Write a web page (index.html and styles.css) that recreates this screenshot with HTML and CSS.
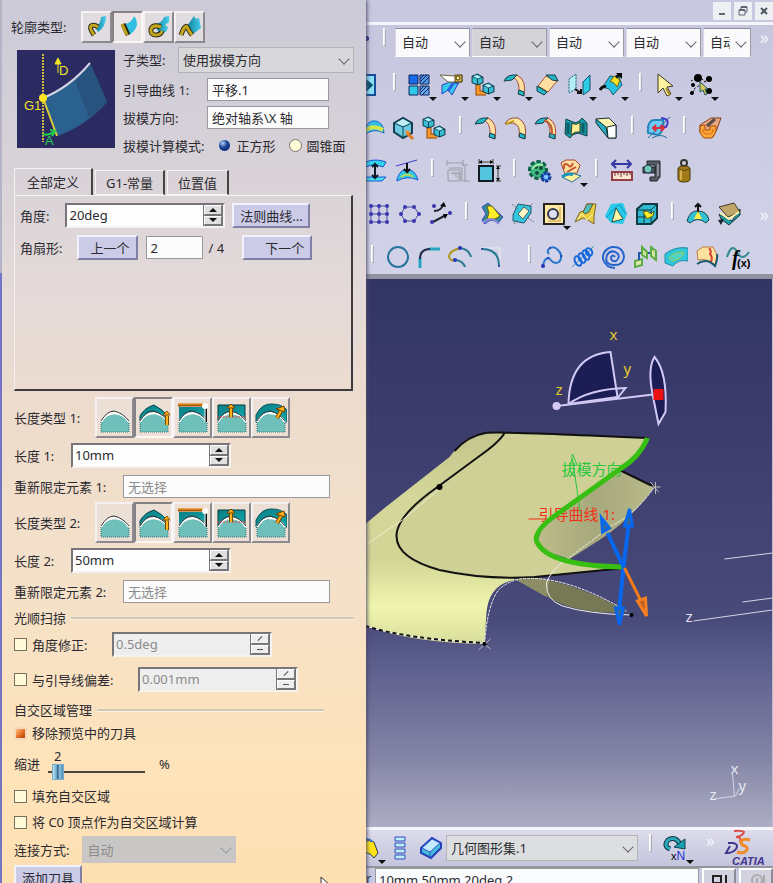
FILE: index.html
```html
<!DOCTYPE html>
<html lang="zh-CN">
<head>
<meta charset="utf-8">
<meta name="viewport" content="width=device-width, initial-scale=1">
<title>CATIA</title>
<link rel="stylesheet" href="styles.css">
</head>
<body>
<svg class="sprite" aria-hidden="true">
  <defs>
    <linearGradient id="blade" x1="0" x2="1"><stop offset="0" stop-color="#0f7f9c"/><stop offset="1" stop-color="#45cdea"/></linearGradient>
    <linearGradient id="teal" x1="0" x2="1" y2="1"><stop offset="0" stop-color="#0b7f86"/><stop offset="1" stop-color="#12a7ad"/></linearGradient>
  </defs>
  <!-- profile types -->
  <symbol id="prof-explicit" viewBox="0 0 24 24"><path d="M10 12Q16 9 16 2L21 1Q21 12 13 17Z" fill="url(#blade)"/><path d="M9 20Q4 13 6 11Q9 9 13 12" fill="none" stroke="#2c2a18" stroke-width="5"/><path d="M9 20Q4 13 6 11Q9 9 13 12" fill="none" stroke="#c2a51c" stroke-width="3"/></symbol>
  <symbol id="prof-line" viewBox="0 0 24 24"><path d="M8 9Q16 8 18 1Q21 4 21 10Q19 17 13 20Z" fill="#30bfe0"/><path d="M7 9L12 20" stroke="#2c2a18" stroke-width="5"/><path d="M6 9L11 20" stroke="#c2a51c" stroke-width="3"/></symbol>
  <symbol id="prof-circle" viewBox="0 0 24 24"><path d="M8 9Q15 8 17 2L22 1V7L18 10L21 12Q20 19 12 19Z" fill="url(#blade)"/><path d="M14 12Q6 9 4 14Q3 20 9 20Q14 20 15 16" fill="none" stroke="#2c2a18" stroke-width="5"/><path d="M14 12Q6 9 4 14Q3 20 9 20Q14 20 15 16" fill="none" stroke="#c2a51c" stroke-width="3"/></symbol>
  <symbol id="prof-conic" viewBox="0 0 24 24"><path d="M9 11L16 1L18 4L21 3L23 13L15 19Z" fill="url(#blade)"/><path d="M3 20Q7 9 9 12Q11 16 14 20" fill="none" stroke="#2c2a18" stroke-width="5"/><path d="M3 20Q7 9 9 12Q11 16 14 20" fill="none" stroke="#c2a51c" stroke-width="3"/></symbol>
  <!-- length types -->
  <symbol id="dome" viewBox="0 0 32 32"><path d="M2 30V20Q5 14 16 12Q27 14 30 20V30Z" fill="#6fc0bb"/><path d="M2 20Q7 11 16 11Q25 12 30 20" fill="none" stroke="#fff" stroke-width="2"/><path d="M2 19Q8 9 15 9Q24 11 30 19" fill="none" stroke="#333" stroke-width="1"/><path d="M2 20V30H30V20" fill="none" stroke="#3d706e" stroke-dasharray="1 1"/></symbol>
  <symbol id="len-none" viewBox="0 0 32 32"><use href="#dome"/></symbol>
  <symbol id="len-std" viewBox="0 0 32 32"><path d="M2 20V14Q6 6 16 3Q26 8 30 15V20Q16 0 2 20" fill="url(#teal)" stroke="#063f43"/><use href="#dome"/><path d="M29 23V14" stroke="#7a4a00" stroke-width="4"/><path d="M29 23V13" stroke="#ffb31a" stroke-width="2"/><path d="M25 13L29 9L32 13Z" fill="#ffa90f" stroke="#8a4d00"/></symbol>
  <symbol id="len-upto" viewBox="0 0 32 32"><path d="M2 5H28V20Q16 2 2 20Z" fill="url(#teal)"/><use href="#dome"/><path d="M1 3H28" stroke="#a55300" stroke-width="3"/><path d="M1 2H28" stroke="#ffb43c"/><path d="M29 5V20" stroke="#111" stroke-width="2"/><path d="M28 3V20" stroke="#fff"/><circle cx="28" cy="4" r="3" fill="#fff"/></symbol>
  <symbol id="len-from" viewBox="0 0 32 32"><path d="M2 3H29V20Q16 2 2 20Z" fill="url(#teal)" stroke="#08383b"/><use href="#dome"/><path d="M1 15H31" stroke="#e04a4a" stroke-dasharray="2 1"/><path d="M15 15V6" stroke="#7a4a00" stroke-width="4"/><path d="M15 15V4" stroke="#ffb31a" stroke-width="2"/><path d="M11 6L15 2L19 6Z" fill="#ffb31a" stroke="#754100"/></symbol>
  <symbol id="len-along" viewBox="0 0 32 32"><path d="M1 13Q7 1 17 2Q27 2 32 8V20H28Q16 2 4 22L1 20Z" fill="url(#teal)" stroke="#075156"/><use href="#dome"/><path d="M22 16L27 7" stroke="#7a4a00" stroke-width="4"/><path d="M22 16L27 7" stroke="#ffb31a" stroke-width="2"/><path d="M21 7L29 4L30 10Z" fill="#ffb31a" stroke="#754100"/></symbol>
  <!-- toolbar row 1 -->
  <symbol id="t-view" viewBox="0 0 24 24"><path d="M2 2H22V22H2Z" fill="#8be1f4" stroke="#174e9c" stroke-width="2"/><path d="M4 12H17M13 8L18 12L13 17" fill="none" stroke="#075272" stroke-width="3"/></symbol>
  <symbol id="t-grid" viewBox="0 0 24 24"><g stroke="#10245f"><path d="M2 2H11V11H2Z" fill="#176be8"/><path d="M13 2H22V11H13Z" fill="#5399e6"/><path d="M2 13H11V22H2Z" fill="#2ccae8"/><path d="M13 13H22V22H13Z" fill="#62a7ea"/><path d="M13 9L20 2M15 11L22 4M13 20L20 13M15 22L22 15M13 6L17 2M13 17L17 13" /></g></symbol>
  <symbol id="t-plane" viewBox="0 0 24 24"><path d="M3 12L11 9L21 7L13 22L9 17L3 21Z" fill="#36cbed" stroke="#2a43c8"/><path d="M9 18L15 9L20 10" stroke="#2d5fe0" stroke-width="3" fill="none"/><path d="M1 2L16 3L23 2V9H15L9 9Z" fill="#fff" stroke="#6d6840"/><path d="M16 2H23V9H16Z" fill="#cfb04c" stroke="#504414"/><circle cx="19" cy="5" r="2" fill="#fff18d" stroke="#504414"/></symbol>
  <symbol id="cube" viewBox="0 0 12 12"><path d="M1 3L6 1L11 4V9L6 11L1 9Z" fill="#38bfd6" stroke="#124050"/><path d="M1 3L6 5L11 4M6 5V11" stroke="#124050" fill="none"/><path d="M2 3L6 2L9 4L6 5Z" fill="#b5effa"/></symbol>
  <symbol id="t-tree" viewBox="0 0 24 24"><path d="M7 11V20H15" stroke="#9b4300" stroke-width="5" fill="none"/><path d="M7 11V20H15" stroke="#ff9b2d" stroke-width="3" fill="none"/><use href="#cube" width="13" height="13"/><use href="#cube" x="11" y="9" width="13" height="13"/></symbol>
  <symbol id="t-sweep" viewBox="0 0 24 24"><path d="M8 4Q17 5 16 20L21 22Q24 7 14 2Z" fill="#ffe0a0" stroke="#a84b38"/><path d="M1 8Q4 1 14 2L9 7Z" fill="#25b6c7" stroke="#123d44"/><path d="M16 17L21 19V23L15 21Z" fill="#25b6c7" stroke="#123d44"/></symbol>
  <symbol id="t-sweep-y" viewBox="0 0 24 24"><path d="M1 8Q4 1 14 2Q24 7 21 22L15 20Q17 9 9 7Z" fill="#ffe59d" stroke="#934b36"/><path d="M2 8L10 5" stroke="#c39b16" stroke-width="2"/><path d="M16 17L21 19V23L15 21Z" fill="#25b6c7" stroke="#123d44"/></symbol>
  <symbol id="t-sweep-m" viewBox="0 0 24 24"><use href="#t-sweep"/><path d="M10 4Q19 7 18 19" stroke="#bb6038" stroke-width="2" fill="none"/></symbol>
  <symbol id="t-fold" viewBox="0 0 24 24"><path d="M3 13L11 3L22 8L13 19Z" fill="#ffe0a0" stroke="#b05139"/><path d="M11 2L20 2L23 8L17 7Z" fill="#25b6c7" stroke="#123d44"/><path d="M2 13L12 19L9 22L2 18Z" fill="#25b6c7" stroke="#123d44"/></symbol>
  <symbol id="t-offset" viewBox="0 0 24 24"><path d="M2 6L9 1V16L2 20Z" fill="#b5edf4" stroke="#176079" stroke-dasharray="2 1"/><path d="M16 9L23 2V17L16 22Z" fill="#2ccbe6" stroke="#125070"/><path d="M8 16L14 20M10 20H14V16" stroke="#111" stroke-width="2" fill="none"/></symbol>
  <symbol id="t-arrow-surf" viewBox="0 0 24 24"><path d="M3 15L11 3L20 4L23 12L14 22Q10 13 3 15Z" fill="#29c0e6" stroke="#195a61"/><path d="M11 9L15 3L21 7L18 14Q15 8 11 9Z" fill="#ffe02b" stroke="#806800"/><path d="M1 17Q4 12 7 14M17 4L22 1" stroke="#111" stroke-width="3" fill="none"/><path d="M17 0H23V6Z"/></symbol>
  <symbol id="t-select" viewBox="0 0 24 24"><path d="M5 1V20L10 15L14 23L18 21L14 14L20 13Z" fill="#fff3a2" stroke="#3c371f" stroke-width="1"/><path d="M13 15L17 22" stroke="#a08b2a" stroke-width="2"/></symbol>
  <symbol id="t-points" viewBox="0 0 24 24"><path d="M2 8L10 4L17 9M5 16L21 5M1 21L7 16M17 15L22 19" stroke="#111" stroke-dasharray="2 2" fill="none"/><circle cx="9" cy="5" r="4"/><circle cx="20" cy="6" r="3"/><circle cx="3" cy="20" r="2"/><circle cx="4" cy="12" r="2"/><circle cx="20" cy="18" r="3"/><path d="M11 9V19L14 17L16 22L18 21L16 16H19Z" fill="#dcc75b" stroke="#185b62"/></symbol>
  <!-- toolbar row 2 -->
  <symbol id="t-dome" viewBox="0 0 24 24"><path d="M1 18Q5 3 14 5Q22 7 22 17Q11 11 1 20Z" fill="#36bde7" stroke="#176dc7"/><path d="M3 15Q10 8 21 14" stroke="#d4e646" stroke-width="4" fill="none"/></symbol>
  <symbol id="t-box" viewBox="0 0 24 24"><path d="M2 7L11 2L20 7V17L11 22L2 16Z" fill="#6ccbe0" stroke="#124050" stroke-width="2"/><path d="M2 7L11 11L20 7M11 11V22" stroke="#124050" fill="none"/><path d="M4 7L11 3L18 7L11 10Z" fill="#c0f0f8"/><path d="M16 18L21 23" stroke="#e4751d" stroke-width="3"/><path d="M13 14L19 16L15 20Z" fill="#f48828"/></symbol>
  <symbol id="t-blend" viewBox="0 0 24 24"><path d="M2 3L9 6Q14 8 18 2L23 7V20L14 17Q8 18 6 22L1 18Z" fill="#139aa6" stroke="#104249"/><path d="M8 7Q13 10 16 6L16 16Q11 15 7 19Z" fill="#ffef93" stroke="#343c24"/><path d="M4 7V18M19 7V17" stroke="#0c5d64" stroke-width="3"/></symbol>
  <symbol id="t-extr" viewBox="0 0 24 24"><path d="M2 3L15 2L22 9V22H14L11 13Z" fill="#fff5b0" stroke="#152e32"/><path d="M2 3L12 11L14 22L2 7Z" fill="#27abc0" stroke="#152e32"/><path d="M13 11L22 9V22H14Z" fill="#fff" stroke="#152e32"/></symbol>
  <symbol id="t-analyze" viewBox="0 0 24 24"><path d="M2 17Q1 5 8 4L17 4Q19 15 12 19Z" fill="#6dcaf1" stroke="#2485ba" stroke-width="2"/><path d="M2 22L24 1M6 22Q15 17 21 22" stroke="#286f98" fill="none"/><path d="M15 2Q25 3 20 11H14" stroke="#4238c8" stroke-width="2" fill="none"/><path d="M7 12H18M10 9L7 12L10 15M15 9L18 12L15 15" stroke="#df2d36" stroke-width="2" fill="none"/></symbol>
  <symbol id="t-mold" viewBox="0 0 24 24"><path d="M2 9L13 2L23 2L19 13L15 21H6L2 16Z" fill="#e8a880" stroke="#874016"/><path d="M9 10L17 3" stroke="#5c4a44" stroke-width="3"/><path d="M2 10L7 9V14H12V10H18V16L14 22H6L2 17Z" fill="#ffa637" stroke="#a44c10"/><path d="M5 13V16L8 18H12L15 16V13" stroke="#c96818" fill="none"/></symbol>
  <!-- toolbar row 3 -->
  <symbol id="t-thick" viewBox="0 0 24 24"><path d="M1 3Q12-1 22 3L19 8Q10 4 2 8Z" fill="#30d5e9" stroke="#1d54d4"/><path d="M2 18H22L18 22H1Z" fill="#46dfec" stroke="#1d54d4"/><path d="M11 5V19M8 8L11 5L14 8M8 16L11 19L14 16" stroke="#101a28" stroke-width="2" fill="none"/></symbol>
  <symbol id="t-project" viewBox="0 0 24 24"><path d="M2 20Q6 9 12 11Q20 10 23 21Q12 16 2 22Z" fill="#31cbe5" stroke="#1a58d4"/><path d="M6 18Q13 13 18 18" stroke="#bbd74d" stroke-width="2" fill="none"/><path d="M1 7L22 1" stroke="#3a3acb"/><path d="M12 4V13M9 10L12 13L15 10" stroke="#111" stroke-width="2" fill="none"/></symbol>
  <symbol id="t-dim-off" viewBox="0 0 24 24"><g stroke="#999ba4" fill="none"><path d="M1 4H17M1 1V7M17 1V7M19 6V22M16 6H22M16 22H24M2 11H14V22H2Z"/><path d="M5 14H14V22" fill="#bbbdc7"/><path d="M3 9H16V22"/></g></symbol>
  <symbol id="t-dim" viewBox="0 0 24 24"><path d="M2 7H16V22H2Z" fill="#54c5dc" stroke="#111b24" stroke-width="2"/><path d="M2 3H16M2 0V5M16 0V5M21 7V22M19 7H24M19 22H24" stroke="#3b3b26" stroke-width="1"/><path d="M2 3L5 1V5ZM16 3L13 1V5ZM21 7L19 10H23ZM21 22L19 19H23Z"/></symbol>
  <symbol id="t-gear" viewBox="0 0 24 24"><circle cx="10" cy="11" r="8" fill="#34af79" stroke="#0b6047" stroke-width="4" stroke-dasharray="4 2"/><circle cx="10" cy="11" r="7" fill="#3fba80"/><circle cx="8" cy="8" r="2" fill="#164b3c"/><circle cx="13" cy="9" r="2" fill="#164b3c"/><circle cx="9" cy="14" r="2" fill="#164b3c"/><path d="M4 10Q9 4 15 6" stroke="#a4efaa" stroke-width="2" fill="none"/><circle cx="18" cy="18" r="4" fill="#3f91ef" stroke="#173999" stroke-width="3" stroke-dasharray="3 1"/><circle cx="18" cy="18" r="2" fill="#8cc8ff"/></symbol>
  <symbol id="t-hand" viewBox="0 0 24 24"><path d="M2 4L7 1H16L21 6L18 14L6 15Z" fill="#ffe0a0" stroke="#a8482f"/><path d="M5 10Q4 3 9 6Q12 10 14 4M8 13L17 8" stroke="#c5532d" stroke-width="2" fill="none"/><path d="M3 18L13 14L22 17L13 23Z" fill="#fff199" stroke="#236e97"/><path d="M3 18Q9 13 14 16" stroke="#1b97bd" stroke-width="3" fill="none"/></symbol>
  <symbol id="t-measure" viewBox="0 0 24 24"><path d="M2 5H21M6 1L2 5L6 9M17 1L21 5L17 9" stroke="#3538a5" stroke-width="2" fill="none"/><path d="M2 13H22V21H2Z" fill="#ffe6d2" stroke="#963f4b" stroke-width="2"/><path d="M5 13V17M8 13V16M11 13V18M14 13V16M17 13V17M20 13V16" stroke="#6c343a"/></symbol>
  <symbol id="t-caliper" viewBox="0 0 24 24"><path d="M6 2H19V18L16 22H9V18H14V6H6Z" fill="#555b62" stroke="#22272c"/><path d="M2 8H14V14H2Z" fill="#4c555d" stroke="#222"/><circle cx="7" cy="10" r="4" fill="#76c9b6" stroke="#203f58"/><path d="M17 5V17" stroke="#8b929b" stroke-width="2"/></symbol>
  <symbol id="t-weight" viewBox="0 0 24 24"><circle cx="12" cy="4" r="3" fill="none" stroke="#34352c" stroke-width="2"/><path d="M6 10Q6 7 12 7Q18 7 18 10V20Q18 23 12 23Q6 23 6 20Z" fill="#a27a18" stroke="#46380d"/><path d="M9 10V21" stroke="#d2b24d" stroke-width="2"/><path d="M6 10Q12 13 18 10" stroke="#5b440e" fill="none"/></symbol>
  <!-- toolbar row 4 -->
  <symbol id="t-array" viewBox="0 0 24 24"><path d="M3 4H21M3 12H21M3 20H21M4 3V21M12 3V21M20 3V21" stroke="#4a4d9e"/><g fill="#3936af"><circle cx="4" cy="4" r="2"/><circle cx="12" cy="4" r="2"/><circle cx="20" cy="4" r="2"/><circle cx="4" cy="12" r="2"/><circle cx="12" cy="12" r="2"/><circle cx="20" cy="12" r="2"/><circle cx="4" cy="20" r="2"/><circle cx="12" cy="20" r="2"/><circle cx="20" cy="20" r="2"/></g></symbol>
  <symbol id="t-circ" viewBox="0 0 24 24"><path d="M7 5H16L21 12L16 19H7L3 12Z" fill="none" stroke="#4a4d9e"/><g fill="#3936af"><circle cx="7" cy="5" r="2"/><circle cx="16" cy="5" r="2"/><circle cx="3" cy="12" r="2"/><circle cx="21" cy="12" r="2"/><circle cx="7" cy="19" r="2"/><circle cx="16" cy="19" r="2"/></g></symbol>
  <symbol id="t-pts-curve" viewBox="0 0 24 24"><path d="M5 9Q12 9 14 3M4 20L17 13" stroke="#1d2633" stroke-width="2" fill="none"/><path d="M11 4L15 0L17 5ZM14 12H19L16 17Z"/><g fill="#3936af"><circle cx="5" cy="4" r="2"/><circle cx="3" cy="20" r="2"/><circle cx="21" cy="11" r="2"/></g></symbol>
  <symbol id="t-patch" viewBox="0 0 24 24"><path d="M2 5L8 1L23 15L18 21Q11 15 5 22L2 18L6 12Z" fill="#318d90" stroke="#3543bd"/><path d="M7 4H12L20 14L15 17H7L9 11Z" fill="#ffee28" stroke="#676318"/><path d="M3 21Q11 13 19 22" stroke="#8f89e4" stroke-width="2" fill="none"/></symbol>
  <symbol id="t-shell" viewBox="0 0 24 24"><path d="M7 2L20 4V11L13 21L2 19V13Z" fill="#36c6dc" stroke="#215970"/><path d="M7 12L13 5L18 9L12 17Z" fill="#fff7c7" stroke="#486066"/><path d="M1 2L7 7M17 16L23 20M3 22L6 18M18 5L22 1" stroke="#667482" stroke-dasharray="2 1"/></symbol>
  <symbol id="t-hole" viewBox="0 0 24 24"><path d="M2 2H22V22H2Z" fill="#ffeaa4" stroke="#25231c" stroke-width="2"/><path d="M18 5V19H6" stroke="#dec374" stroke-width="2" fill="none"/><circle cx="11" cy="12" r="5" fill="#dedff1" stroke="#34384a" stroke-width="2"/></symbol>
  <symbol id="t-trim" viewBox="0 0 24 24"><path d="M2 20L7 10L11 9L14 2H23L21 14V22L15 18L10 16Z" fill="#e7cd40" stroke="#78652a"/><path d="M10 10L14 2H20L16 10L12 12Z" fill="#4ebdbb" stroke="#725c20"/><path d="M4 18L9 12L14 18L20 12" stroke="#fff6b4" fill="none"/></symbol>
  <symbol id="t-tri" viewBox="0 0 24 24"><path d="M7 2L19 1L23 12L19 22L7 21L1 14Z" fill="#27cae7"/><path d="M8 20L12 6L19 17Z" fill="#fff5a3" stroke="#34504c"/><path d="M2 16L14 3M15 2L22 12" stroke="#1691c6"/></symbol>
  <symbol id="t-heart" viewBox="0 0 24 24"><path d="M2 7L8 2H22V16L16 22H2Z" fill="#2cbbd2" stroke="#113a43" stroke-width="2"/><path d="M2 8H16L22 2M16 8V22M3 15H16M9 8V21" stroke="#113a43" fill="none"/><path d="M8 10L12 9L16 12L19 9L18 14L12 17Z" fill="#ffec24" stroke="#636013"/></symbol>
  <symbol id="t-normal" viewBox="0 0 24 24"><path d="M1 19Q4 8 12 9Q21 9 23 18L20 21Q12 14 4 21Z" fill="#36bed2" stroke="#164952"/><path d="M12 12V2M9 5L12 2L15 5" stroke="#111" stroke-width="2" fill="none"/><path d="M12 9L16 17H8Z" fill="#ffeb45"/></symbol>
  <symbol id="t-layers" viewBox="0 0 24 24"><path d="M2 12L15 19L23 7V13L12 23L4 17Z" fill="#209ba8" stroke="#163539"/><path d="M2 5L17 1L23 10L11 15Z" fill="#bfa76a" stroke="#443928"/><path d="M3 11L12 17L22 10" stroke="#fff5a8" stroke-width="2" fill="none"/><path d="M1 18L7 17L4 23Z" fill="#17232a"/></symbol>
  <!-- toolbar row 5 -->
  <symbol id="t-circle" viewBox="0 0 24 24"><circle cx="12" cy="12" r="10" fill="none" stroke="#29749d" stroke-width="2"/></symbol>
  <symbol id="t-corner" viewBox="0 0 24 24"><path d="M3 23V13M12 4H23" stroke="#24a6c2" stroke-width="3"/><path d="M3 14Q3 4 13 4" stroke="#202a4c" stroke-width="2" fill="none"/></symbol>
  <symbol id="t-conn" viewBox="0 0 24 24"><path d="M12 3Q1 6 1 12Q3 17 8 15" stroke="#aa941c" stroke-width="2" fill="none"/><path d="M12 3Q21 4 23 12M8 15Q15 16 17 22" stroke="#287a92" stroke-width="2" fill="none"/><circle cx="12" cy="3" r="2" fill="#2834b9"/><circle cx="7" cy="15" r="2" fill="#2834b9"/></symbol>
  <symbol id="t-arc" viewBox="0 0 24 24"><path d="M3 3H21V20" fill="none" stroke="#eee" stroke-width="1"/><path d="M3 4Q20 4 20 21" fill="none" stroke="#287a92" stroke-width="2"/><circle cx="3" cy="4" r="1" fill="#252f9b"/><circle cx="20" cy="21" r="1" fill="#252f9b"/></symbol>
  <symbol id="t-spline" viewBox="0 0 24 24"><path d="M3 21Q4 13 9 13Q14 20 19 17Q24 11 18 5Q14 1 10 3Q6 6 9 9" fill="none" stroke="#2876ca" stroke-width="2"/><g fill="#2536b7"><circle cx="3" cy="21" r="2"/><circle cx="8" cy="13" r="1"/><circle cx="21" cy="11" r="1"/><circle cx="10" cy="3" r="1"/></g></symbol>
  <symbol id="t-helix" viewBox="0 0 24 24"><path d="M1 22L23 1" stroke="#3d9cbd"/><g fill="none" stroke="#1667dc" stroke-width="2"><ellipse cx="7" cy="16" rx="3" ry="5" transform="rotate(-25 7 16)"/><ellipse cx="11" cy="13" rx="3" ry="5" transform="rotate(-25 11 13)"/><ellipse cx="15" cy="10" rx="3" ry="5" transform="rotate(-25 15 10)"/><ellipse cx="18" cy="7" rx="3" ry="4" transform="rotate(-25 18 7)"/></g></symbol>
  <symbol id="t-spiral" viewBox="0 0 24 24"><path d="M13 12Q11 9 9 12Q9 17 14 16Q19 12 15 8Q9 4 5 10Q2 19 11 20Q21 21 22 12Q21 1 10 2Q0 5 1 14Q4 23 13 23" fill="none" stroke="#2765cb" stroke-width="2"/></symbol>
  <symbol id="t-spine" viewBox="0 0 24 24"><path d="M2 16L9 14V20L2 22Z" fill="#e2e6a8" stroke="#5cab45" stroke-width="2"/><path d="M6 15V8H20" fill="none" stroke="#2658a9" stroke-width="2"/><path d="M9 2L14 7V13L9 10ZM18 2L23 6V15L18 11Z" fill="#d3dfa4" stroke="#5cab45" stroke-width="2"/></symbol>
  <symbol id="t-surf" viewBox="0 0 24 24"><path d="M1 9Q11 1 24 3V16Q14 14 9 21L1 18Z" fill="#2fc7dc" stroke="#2289a8"/><path d="M5 13Q10 6 20 7Q18 15 8 16Z" fill="#53d3c1" stroke="#94c850"/></symbol>
  <symbol id="t-bound" viewBox="0 0 24 24"><path d="M2 6L8 2H18L22 10L20 20Q13 13 3 15Z" fill="#ffe2a0" stroke="#c07a3a"/><path d="M14 3Q17 6 15 9Q18 12 16 17" fill="none" stroke="#d34130" stroke-width="2"/><path d="M2 19Q12 12 20 21Q23 14 22 9" fill="none" stroke="#1c5a70" stroke-width="2"/></symbol>
  <!-- bottom bar -->
  <symbol id="b-surf" viewBox="0 0 24 24"><path d="M1 12Q9 1 17 6L21 17L17 22Q11 13 3 20Z" fill="#ffe516" stroke="#293754"/><path d="M4 7Q11 0 15 6" fill="none" stroke="#3d71bb" stroke-width="2"/></symbol>
  <symbol id="b-list" viewBox="0 0 24 24"><g fill="#bfeff6" stroke="#2a49bc" stroke-width="1"><path d="M7 1H17V5H7ZM7 7H17V11H7ZM7 13H17V17H7ZM7 19H17V23H7Z"/></g></symbol>
  <symbol id="b-plane" viewBox="0 0 24 24"><path d="M2 12L13 2L22 7V12L12 22L2 17Z" fill="#45bbd8" stroke="#2740bb" stroke-width="2"/><path d="M3 12L13 3L21 7L11 16Z" fill="#c6eaff" stroke="#3159cb"/><path d="M11 16V21" stroke="#3159cb"/></symbol>
</svg>

<main class="workbench">
  <form class="dialog">
    <div class="row profile">
      <span class="label">轮廓类型:</span>
      <div class="switches">
        <button type="button" class="switch" aria-label="显式"><svg><use href="#prof-explicit"/></svg></button>
        <button type="button" class="switch on" aria-label="直线"><svg><use href="#prof-line"/></svg></button>
        <button type="button" class="switch" aria-label="圆"><svg><use href="#prof-circle"/></svg></button>
        <button type="button" class="switch" aria-label="二次曲线"><svg><use href="#prof-conic"/></svg></button>
      </div>
    </div>

    <div class="definition">
      <svg class="thumb" viewBox="0 0 98 98" aria-hidden="true">
        <path d="M0 0H98V98H0Z" fill="#2b2b62"/>
        <path d="M26 48Q53 35 74 15L90 52Q69 76 40 86Z" fill="#2b618f"/>
        <path d="M58 30L74 15L90 52Q82 62 72 68Z" fill="#28537f"/>
        <path d="M26 48Q53 37 73 13" fill="none" stroke="#d5d5e6" stroke-width="2"/>
        <path d="M26 4V92" stroke="#c9b940" stroke-width="2" stroke-dasharray="2 1"/>
        <path d="M26 48L40 86" stroke="#d9cc3c" stroke-width="2"/>
        <circle cx="26" cy="48" r="4" fill="#ffe521"/>
        <path d="M41 23V9M38 14L41 8L44 14Z" stroke="#f1e22a" fill="#f1e22a"/>
        <path d="M26 84Q31 86 37 82M33 80L38 81L35 86" stroke="#1fd24b" stroke-width="2" fill="none"/>
        <g font-family="Liberation Sans, sans-serif" font-size="13"><text x="42" y="25" fill="#f1e22a">D</text><text x="7" y="60" fill="#f1e22a">G1</text><text x="28" y="95" fill="#1fd24b">A</text></g>
      </svg>
      <div class="fields">
        <div class="row"><label class="label" for="subtype">子类型:</label><span class="drop drop-sub"><select id="subtype"><option>使用拔模方向</option></select></span></div>
        <div class="row"><label class="label key" for="guide">引导曲线 1:</label><input class="box short" id="guide" value="平移.1"></div>
        <div class="row"><label class="label key" for="draft">拔模方向:</label><input class="box short" id="draft" value="绝对轴系\X 轴"></div>
        <div class="row radios" role="radiogroup" aria-labelledby="mode"><span class="label" id="mode">拔模计算模式:</span>
          <label><input type="radio" name="mode" checked>正方形</label>
          <label><input type="radio" name="mode">圆锥面</label>
        </div>
      </div>
    </div>

    <div class="tabs" role="tablist">
      <button type="button" role="tab" class="tab current" aria-selected="true">全部定义</button>
      <button type="button" role="tab" class="tab">G1-常量</button>
      <button type="button" role="tab" class="tab">位置值</button>
    </div>
    <section class="panel" role="tabpanel">
      <div class="row"><label class="label" for="angle">角度:</label>
        <span class="spin after-angle"><input id="angle" value="20deg"><button type="button" class="up" aria-label="增加"></button><button type="button" class="down" aria-label="减少"></button></span>
        <button type="button" class="push law">法则曲线...</button></div>
      <div class="row"><label class="label" for="sector">角扇形:</label>
        <button type="button" class="push prev">上一个</button><input class="box sector" id="sector" value="2"><span class="total">/ 4</span><button type="button" class="push next">下一个</button></div>
    </section>

    <div class="length">
      <div class="row"><span class="label kind">长度类型 1:</span>
        <div class="switches large">
          <button type="button" class="switch" aria-label="无"><svg><use href="#len-none"/></svg></button>
          <button type="button" class="switch on" aria-label="标准"><svg><use href="#len-std"/></svg></button>
          <button type="button" class="switch" aria-label="从/到"><svg><use href="#len-upto"/></svg></button>
          <button type="button" class="switch" aria-label="从极值"><svg><use href="#len-from"/></svg></button>
          <button type="button" class="switch" aria-label="沿曲面"><svg><use href="#len-along"/></svg></button>
        </div></div>
      <div class="row"><label class="label value" for="len1">长度 1:</label><span class="spin"><input id="len1" value="10mm"><button type="button" class="up" aria-label="增加"></button><button type="button" class="down" aria-label="减少"></button></span></div>
      <div class="row"><label class="label limit" for="lim1">重新限定元素 1:</label><input class="box long" id="lim1" placeholder="无选择"></div>
    </div>
    <div class="length">
      <div class="row"><span class="label kind">长度类型 2:</span>
        <div class="switches large">
          <button type="button" class="switch" aria-label="无"><svg><use href="#len-none"/></svg></button>
          <button type="button" class="switch on" aria-label="标准"><svg><use href="#len-std"/></svg></button>
          <button type="button" class="switch" aria-label="从/到"><svg><use href="#len-upto"/></svg></button>
          <button type="button" class="switch" aria-label="从极值"><svg><use href="#len-from"/></svg></button>
          <button type="button" class="switch" aria-label="沿曲面"><svg><use href="#len-along"/></svg></button>
        </div></div>
      <div class="row"><label class="label value" for="len2">长度 2:</label><span class="spin"><input id="len2" value="50mm"><button type="button" class="up" aria-label="增加"></button><button type="button" class="down" aria-label="减少"></button></span></div>
      <div class="row"><label class="label limit" for="lim2">重新限定元素 2:</label><input class="box long" id="lim2" placeholder="无选择"></div>
    </div>

    <h2 class="rule">光顺扫掠</h2>
    <div class="row smooth"><label class="check check-angle"><input type="checkbox">角度修正:</label><span class="spin off"><input aria-label="角度修正" value="0.5deg" disabled><button type="button" class="up" disabled aria-label="增加"></button><button type="button" class="down" disabled aria-label="减少"></button></span></div>
    <div class="row smooth"><label class="check check-dev"><input type="checkbox">与引导线偏差:</label><span class="spin off"><input aria-label="与引导线偏差" value="0.001mm" disabled><button type="button" class="up" disabled aria-label="增加"></button><button type="button" class="down" disabled aria-label="减少"></button></span></div>

    <h2 class="rule twisted">自交区域管理</h2>
    <label class="check"><input type="checkbox" checked>移除预览中的刀具</label>
    <div class="row setback"><label class="label" for="setback">缩进</label><span class="slider"><output for="setback">2</output><input type="range" id="setback" min="0" max="20" value="1"></span><span>%</span></div>
    <label class="check spaced"><input type="checkbox">填充自交区域</label>
    <label class="check spaced"><input type="checkbox">将 C0 顶点作为自交区域计算</label>
    <div class="row connect"><label class="label" for="connect">连接方式:</label><span class="drop drop-off"><select id="connect" disabled><option>自动</option></select></span></div>
    <button type="button" class="push add">添加刀具</button>
    <svg class="pointer" viewBox="0 0 12 18" aria-hidden="true"><path d="M1 1V14L4 11L7 16L9 15L7 10H11Z" fill="#fff" stroke="#333"/></svg>
  </form>

  <section class="stage">
    <header class="titlebar">
      <button type="button" aria-label="最小化"><svg viewBox="0 0 18 18"><path d="M6 12H12" stroke="#5d6673" stroke-width="2"/></svg></button>
      <button type="button" aria-label="还原"><svg viewBox="0 0 18 18"><path d="M5 8H11V13H5ZM7 8V5H13V10H11" fill="none" stroke="#5d6673"/><path d="M5 8H11M7 5H13" stroke="#5d6673" stroke-width="2"/></svg></button>
      <button type="button" aria-label="关闭"><svg viewBox="0 0 18 18"><path d="M6 6L12 12M12 6L6 12" stroke="#4c5562" stroke-width="2"/></svg></button>
    </header>
    <div class="toolbars">
      <div class="graphic">
        <i class="dot"></i><i class="sep"></i>
        <span class="drop"><select aria-label="颜色"><option>自动</option></select></span>
        <span class="drop gray"><select aria-label="透明度"><option>自动</option></select></span>
        <span class="drop"><select aria-label="线宽"><option>自动</option></select></span>
        <span class="drop"><select aria-label="线型"><option>自动</option></select></span>
        <span class="drop narrow"><select aria-label="点符号"><option>自动</option></select></span>
        <span class="more">»</span>
      </div>
      <div class="tools t1">
        <button type="button" aria-label="视图"><svg><use href="#t-view"/></svg></button><i class="sep"></i>
        <button type="button" class="menu" aria-label="网格"><svg><use href="#t-grid"/></svg></button>
        <button type="button" class="menu" aria-label="平面"><svg><use href="#t-plane"/></svg></button>
        <button type="button" class="menu" aria-label="结构"><svg><use href="#t-tree"/></svg></button>
        <button type="button" class="menu" aria-label="扫掠"><svg><use href="#t-sweep"/></svg></button>
        <button type="button" aria-label="折叠"><svg><use href="#t-fold"/></svg></button>
        <button type="button" class="menu" aria-label="偏移"><svg><use href="#t-offset"/></svg></button>
        <button type="button" class="menu" aria-label="外插"><svg><use href="#t-arrow-surf"/></svg></button><i class="sep"></i>
        <button type="button" class="menu" aria-label="选择"><svg><use href="#t-select"/></svg></button>
        <button type="button" class="menu" aria-label="选择集"><svg><use href="#t-points"/></svg></button>
      </div>
      <div class="tools t2">
        <button type="button" aria-label="曲面"><svg><use href="#t-dome"/></svg></button>
        <button type="button" aria-label="实体"><svg><use href="#t-box"/></svg></button>
        <button type="button" aria-label="结构树"><svg><use href="#t-tree"/></svg></button><i class="sep"></i>
        <button type="button" aria-label="扫掠"><svg><use href="#t-sweep"/></svg></button>
        <button type="button" aria-label="适应性扫掠"><svg><use href="#t-sweep-y"/></svg></button>
        <button type="button" aria-label="多截面"><svg><use href="#t-sweep-m"/></svg></button>
        <button type="button" aria-label="桥接"><svg><use href="#t-blend"/></svg></button>
        <button type="button" aria-label="拉伸"><svg><use href="#t-extr"/></svg></button><i class="sep"></i>
        <button type="button" aria-label="分析"><svg><use href="#t-analyze"/></svg></button><i class="sep"></i>
        <button type="button" aria-label="型芯"><svg><use href="#t-mold"/></svg></button>
      </div>
      <div class="tools t3">
        <button type="button" aria-label="厚曲面"><svg><use href="#t-thick"/></svg></button>
        <button type="button" aria-label="投影"><svg><use href="#t-project"/></svg></button><i class="sep"></i>
        <button type="button" aria-label="尺寸" disabled><svg><use href="#t-dim-off"/></svg></button>
        <button type="button" aria-label="约束"><svg><use href="#t-dim"/></svg></button><i class="sep"></i>
        <button type="button" aria-label="更新"><svg><use href="#t-gear"/></svg></button>
        <button type="button" class="menu" aria-label="目录"><svg><use href="#t-hand"/></svg></button><i class="sep"></i>
        <button type="button" aria-label="测量间距"><svg><use href="#t-measure"/></svg></button>
        <button type="button" aria-label="测量项"><svg><use href="#t-caliper"/></svg></button>
        <button type="button" aria-label="测量惯量"><svg><use href="#t-weight"/></svg></button>
      </div>
      <div class="tools t4">
        <button type="button" aria-label="矩形阵列"><svg><use href="#t-array"/></svg></button>
        <button type="button" aria-label="圆形阵列"><svg><use href="#t-circ"/></svg></button>
        <button type="button" aria-label="点复制"><svg><use href="#t-pts-curve"/></svg></button><i class="sep"></i>
        <button type="button" aria-label="填充"><svg><use href="#t-patch"/></svg></button>
        <button type="button" aria-label="抽壳"><svg><use href="#t-shell"/></svg></button>
        <button type="button" class="menu" aria-label="孔"><svg><use href="#t-hole"/></svg></button>
        <button type="button" aria-label="修剪"><svg><use href="#t-trim"/></svg></button>
        <button type="button" aria-label="三角"><svg><use href="#t-tri"/></svg></button>
        <button type="button" aria-label="体"><svg><use href="#t-heart"/></svg></button><i class="sep"></i>
        <button type="button" aria-label="法线"><svg><use href="#t-normal"/></svg></button>
        <button type="button" aria-label="图层"><svg><use href="#t-layers"/></svg></button>
        <span class="more">»</span>
      </div>
      <div class="tools t5">
        <i class="sep"></i>
        <button type="button" aria-label="圆"><svg><use href="#t-circle"/></svg></button>
        <button type="button" aria-label="圆角"><svg><use href="#t-corner"/></svg></button>
        <button type="button" aria-label="连接曲线"><svg><use href="#t-conn"/></svg></button>
        <button type="button" aria-label="圆弧"><svg><use href="#t-arc"/></svg></button><i class="sep apart"></i>
        <button type="button" aria-label="样条线"><svg><use href="#t-spline"/></svg></button>
        <button type="button" aria-label="螺旋线"><svg><use href="#t-helix"/></svg></button>
        <button type="button" aria-label="螺线"><svg><use href="#t-spiral"/></svg></button>
        <button type="button" aria-label="脊线"><svg><use href="#t-spine"/></svg></button>
        <button type="button" aria-label="等参数曲线"><svg><use href="#t-surf"/></svg></button>
        <button type="button" aria-label="边界"><svg><use href="#t-bound"/></svg></button>
        <button type="button" aria-label="公式"><svg viewBox="0 0 24 24"><path d="M1 12Q6-3 11 7Q16 17 23 7" fill="none" stroke="#318b91" stroke-width="2"/><text class="fx" x="6" y="20">f<tspan class="arg" x="11" y="22">(x)</tspan></text></svg></button>
      </div>
    </div>

    <svg class="viewport" viewBox="366 279 407 548" preserveAspectRatio="xMidYMid slice" role="img" aria-label="扫掠曲面预览">
      <defs>
        <linearGradient id="sky" x1="0" y1="0" x2="0" y2="1"><stop offset="0" stop-color="#323564"/><stop offset=".25" stop-color="#3b3c6c"/><stop offset=".62" stop-color="#484a7a"/><stop offset=".72" stop-color="#606290"/><stop offset=".88" stop-color="#8686a8"/><stop offset="1" stop-color="#adaec4"/></linearGradient>
        <linearGradient id="flank" x1="0" y1="0" x2="0" y2="1"><stop offset="0" stop-color="#c3c58c"/><stop offset=".3" stop-color="#d4d799"/><stop offset=".6" stop-color="#d2d595"/><stop offset=".82" stop-color="#f0f5ae"/><stop offset="1" stop-color="#d8dd9c"/></linearGradient>
        <linearGradient id="under" x1="0" y1="0" x2="1" y2="0"><stop offset="0" stop-color="#bdbe8a"/><stop offset=".5" stop-color="#a7a87c"/><stop offset="1" stop-color="#b9ba8a"/></linearGradient>
      </defs>
      <path d="M0 279H1200V827H0Z" fill="url(#sky)"/>
      <path d="M366 524L385 508L450 457Q462 440 475 436Q485 432 505 433L515 580Q490 584 487 612L485 644Q415 643 366 626Z" fill="url(#flank)"/>
      <path d="M620 470L655 487Q632 519 600 540L570 559L536 548L545 520Z" fill="url(#under)"/>
      <path d="M515 579Q545 575 582 590Q607 599 627 612Q580 615 552 599Z" fill="#777955"/>
      <path d="M515 579Q532 576 550 580L547 597Z" fill="#8d8e65"/>
      <path d="M505 433L648 438Q638 457 616 473L562 512Q536 528 538 544Q547 566 625 567Q565 576 515 578Q432 575 404 552Q389 536 405 514Q420 494 441 482L480 456Q500 442 505 433Z" fill="#cfd096"/>
      <path d="M455 451Q468 436 486 433Q495 431 648 438" fill="none" stroke="#111" stroke-width="2"/>
      <path d="M505 433Q500 442 480 456L438 487Q397 516 397 536Q397 558 440 570Q485 580 535 577L625 568" fill="none" stroke="#111" stroke-width="2"/>
      <path d="M366 545L403 520L440 489" fill="none" stroke="#ecedce"/><circle cx="440" cy="487" r="3"/>
      <path d="M366 626Q407 639 485 643" fill="none" stroke="#eee"/><path d="M366 626Q407 639 485 643" fill="none" stroke="#111" stroke-width="2" stroke-dasharray="4 3"/>
      <path d="M485 644Q488 604 499 590Q507 582 520 579Q565 574 627 611M655 487Q635 515 613 525L568 559" fill="none" stroke="#eee" stroke-dasharray="3 1"/>
      <path d="M568 558Q550 572 547 583Q546 600 563 606Q588 614 632 615" fill="none" stroke="#eee"/><circle cx="632" cy="615" r="2"/>
      <path d="M620 470L655 487" stroke="#111" stroke-width="2"/>
      <path d="M479 640L491 649M491 639L479 650M651 482L659 492M650 487H661M656 482V494" stroke="#bbb"/><circle cx="485" cy="644" r="2"/>
      <g class="scene-label"><text x="562" y="475" fill="#28c83b">拔模方向</text><text x="539" y="520" fill="#ef3117">引导曲线 1:</text></g>
      <path d="M529 519H547" stroke="#ef3117"/>
      <path d="M581 514L573 459M571 466L573 454L578 466" fill="none" stroke="#28c83b"/>
      <path d="M648 438Q640 457 622 468L562 511Q531 532 538 543Q550 566 625 567" fill="none" stroke="#38bf14" stroke-width="5"/>
      <g stroke="#0768ef" stroke-width="4" fill="none"><path d="M624 567L608 533M624 567L629 526M624 567L620 607"/></g>
      <g stroke="#0768ef" stroke-width="3" fill="#326a91"><path d="M602 518L603 532L610 528ZM630 509L625 526L633 526ZM620 625L616 608L624 608Z"/></g>
      <path d="M625 568L642 602" stroke="#f47a18" stroke-width="3"/><path d="M647 616L638 601L646 598Z" fill="#b95c26" stroke="#f98020" stroke-width="3"/>
      <g stroke="#d2c9f4" stroke-width="2" fill="#1d1d55"><path d="M569 404Q570 355 611 352L618 397Z"/><path d="M569 404Q590 389 626 388L618 398" fill="none"/><path d="M557 406L658 394" fill="none"/><path d="M655 357Q648 368 653 394L659 424L666 412Q668 372 655 357Z"/></g>
      <circle cx="557" cy="406" r="4" fill="#d2c9f4"/><path d="M654 389H664V400H654Z" fill="#eb1111"/>
      <g class="axis-label"><text x="610" y="340">x</text><text x="624" y="374">y</text><text x="556" y="395">z</text></g>
      <path d="M725 559L773 553M743 602L773 598M694 621L773 610M735 796L733 774M736 796L714 799M736 796L740 788" stroke="#d3d4e3" fill="none"/>
      <g class="axis-label pale"><text x="686" y="622">z</text><text x="731" y="774">x</text><text x="739" y="791">y</text><text x="710" y="800">z</text></g>
    </svg>

    <div class="bottombar">
      <div class="tools">
        <button type="button" class="menu" aria-label="曲面"><svg><use href="#b-surf"/></svg></button>
        <button type="button" aria-label="列表"><svg><use href="#b-list"/></svg></button>
        <button type="button" aria-label="平面"><svg><use href="#b-plane"/></svg></button>
      </div>
      <span class="drop geoset"><select aria-label="几何图形集"><option>几何图形集.1</option></select></span>
      <i class="sep"></i>
      <button type="button" class="redo menu" aria-label="更新"><svg viewBox="0 0 28 26"><path d="M8 14Q1 11 6 5Q14 0 19 11" fill="none" stroke="#14323b" stroke-width="5"/><path d="M8 14Q1 11 6 5Q14 0 19 11" fill="none" stroke="#28a9bc" stroke-width="3"/><path d="M12 12L23 4V14Z" fill="#1c9fb2" stroke="#113c47"/><text class="xn" x="9" y="25">x<tspan class="n">N</tspan></text></svg></button>
      <span class="more">»</span>
      <svg class="logo" viewBox="0 0 46 38" role="img" aria-label="CATIA">
        <path d="M11 2Q19 1 21 3Q20 7 13 8Q19 8 17 13" fill="none" stroke="#dc4c45" stroke-width="2"/>
        <path d="M5 14L10 14Q16 15 13 20Q10 24 3 24L7 17" fill="none" stroke="#40348f" stroke-width="2"/>
        <path d="M27 11Q19 9 18 13Q18 16 22 17Q26 19 23 22Q20 25 14 23" fill="none" stroke="#f08a27" stroke-width="3"/>
        <text class="brand" x="9" y="36">CATIA</text>
      </svg>
    </div>
    <div class="command">
      <label for="cmd">r</label><input id="cmd" value="10mm 50mm 20deg 2">
      <button type="button" aria-label="对话框"><svg viewBox="0 0 24 14"><path d="M5 3H13V10H5ZM5 12H13M18 2V12H15" fill="none" stroke="#222" stroke-width="2"/></svg></button>
      <button type="button" aria-label="信息" disabled><svg viewBox="0 0 24 14"><circle cx="12" cy="7" r="5" fill="none" stroke="#aaa" stroke-width="2"/><path d="M12 5V10M19 2V12" stroke="#aaa" stroke-width="2"/></svg></button>
    </div>
  </section>
</main>
</body>
</html>
```
FILE: styles.css
```css
* { box-sizing: border-box; }

body {
  margin: 0;
  height: 100vh;
  overflow: hidden;
  color: #2b2a30;
  font: 13px/18px "Noto Sans", "Noto Sans CJK SC", sans-serif;
  background: #c9c9e1;
}

button, input, select { font: inherit; color: inherit; margin: 0; }
button { padding: 0; }
.sprite { position: absolute; width: 0; height: 0; }

.workbench {
  display: grid;
  grid-template-columns: 366px minmax(0, 1fr);
  height: 100%;
}

/* ---- dialog ---- */
.dialog {
  position: relative;
  z-index: 1;
  overflow: hidden;
  padding: 11px 12px 0 12px;
  border-left: 2px solid #8080c4;
  border-image: linear-gradient(#b4b4c6 31%, #7474c6 31%) 1;
  background: linear-gradient(#cbcad7, #dbd4d8 23%, #e5dad8 34%, #eddccd 46%, #f4e1c9 66%, #ffe3b9 88%, #fddfb2);
  box-shadow: 1px 0 4px #4c4a66;
}

.row { display: flex; align-items: center; }
.label { white-space: nowrap; flex: none; }
.profile { margin-left: -3px; }
.profile .switches { margin-left: 15px; }

.switches { display: flex; }
.switch {
  display: grid;
  place-items: center;
  width: 31px;
  height: 32px;
  background: #e0dce0;
  border: 2px solid;
  border-color: #f5f1f2 #8d8a8f #8d8a8f #f5f1f2;
}
.switch svg { width: 24px; height: 24px; }
.switch.on { border-color: #858187 #faf6f4 #faf6f4 #858187; background: #eae4e4; }
.large .switch { width: 39px; height: 41px; background: #ecdfd6; }
.large .switch svg { width: 32px; height: 32px; }

.definition { display: flex; gap: 8px; margin: 4px 0 0 3px; }
.thumb { width: 98px; height: 98px; margin-top: 3px; flex: none; }
.fields { display: grid; gap: 5px; flex: 1; }
.key { width: 84px; }

.drop { position: relative; display: block; }
.drop select {
  appearance: none;
  display: block;
  width: 100%;
  height: 26px;
  padding: 0 20px 0 4px;
  border: 1px solid #b4b4b8;
  border-radius: 0;
  background: #d8d8da;
}
.drop::after {
  content: "";
  position: absolute;
  right: 6px;
  top: 8px;
  width: 7px;
  height: 7px;
  border: solid #66676c;
  border-width: 0 1px 1px 0;
  transform: rotate(45deg);
}
.drop-sub { width: 176px; margin-left: auto; }

.box {
  height: 23px;
  min-width: 0;
  padding: 0 4px;
  border: 1px solid #9a989c;
  background: #fcfcfc;
}
.box::placeholder { color: #8b8b8b; opacity: 1; }
.short { width: 122px; }
.long { width: 207px; }

.radios { height: 23px; gap: 14px; }
.radios label { display: flex; align-items: center; gap: 5px; white-space: nowrap; }
.radios label + label { margin-left: -1px; }
.radios input {
  appearance: none;
  width: 13px;
  height: 13px;
  border: 1px solid #777;
  border-radius: 50%;
  background: #fffbd6;
}
.radios input:checked { border-color: #cfd5e8; background: radial-gradient(circle at 35% 30%, #b7d4ff, #1d4696 40%, #0c1d5a); }

.tabs { display: flex; gap: 2px; margin-top: 11px; }
.tab {
  height: 27px;
  padding: 0 12px;
  border: solid;
  border-width: 1px 2px 0 1px;
  border-color: #f6f1f2 #444 #f6f1f2 #f6f1f2;
  background: none;
}
.tab:not(.current) { height: 25px; margin-top: 2px; padding: 0 10px; border-bottom: 1px solid #f6f1f2; }
.panel {
  display: flex;
  flex-direction: column;
  gap: 7px;
  min-height: 196px;
  margin-right: 1px;
  padding: 7px 0 0 5px;
  border: solid;
  border-width: 1px 2px 2px 1px;
  border-color: #f4eff0 #3d3b3e #3d3b3e #f4eff0;
}
.after-angle { margin: 0 7px 0 16px; }

.spin {
  display: grid;
  grid-template: 1fr 1fr / minmax(0, 1fr) 20px;
  width: 160px;
  height: 25px;
  border: 2px solid;
  border-color: #77757a #f7f2ee #f7f2ee #77757a;
  background: #77757a;
}
.spin input {
  grid-row: 1 / 3;
  width: 100%;
  border: 0;
  padding: 0 2px 2px 2px;
  background: #fefefe;
  min-height: 0;
}
.spin button {
  display: grid;
  place-items: center;
  margin: 0 1px 1px 1px;
  border: 1px solid;
  border-color: #fff #777 #777 #fff;
  background: #e0dfe2;
}
.spin button::after {
  content: "";
  border: solid transparent;
  border-width: 0 4px 4px;
  border-bottom-color: #111;
}
.spin .down::after { border-width: 4px 4px 0; border-top-color: #111; border-bottom-color: transparent; }
.spin.off input, .spin.off button { background: #eee; color: #8b8b8b; }
.spin.off button::after { width: 6px; height: 1px; border: 0; background: #555; }
.spin.off .up::after { transform: rotate(-45deg); }

.push {
  height: 25px;
  padding: 0 6px;
  border: 2px solid;
  border-color: #f2f2ff #8080a4 #8080a4 #f2f2ff;
  background: #cbcbe7;
  white-space: nowrap;
}
.law { width: 78px; padding: 0; }
.prev { width: 61px; margin-left: 15px; padding: 0; padding-left: 4px; }
.sector { width: 57px; margin: 0 5px 0 8px; padding: 0 3px; }
.next { width: 70px; margin-left: 18px; text-align: right; }

.length { margin-top: 6px; }
.length + .length { margin-top: 4px; }
.length .row + .row { margin-top: 5px; }
.length .row:last-child { margin-top: 7px; }
.kind { width: 81px; }
.value { width: 57px; }
.limit { width: 109px; }

.rule {
  display: flex;
  align-items: center;
  gap: 5px;
  margin: 5px 0 4px;
  font: inherit;
  line-height: 20px;
}
.rule::after { content: ""; flex: 1; height: 2px; background: #cfc8bd; border-bottom: 1px solid #fff2dc; }
.rule.twisted { margin: 8px 30px 3px 0; }

.check { display: flex; align-items: center; gap: 5px; height: 20px; flex: none; white-space: nowrap; }
.check input {
  appearance: none;
  width: 13px;
  height: 13px;
  border: 1px solid #77705f;
  background: #fffbd8;
}
.check input:checked {
  border: 2px solid #f7d8b8;
  background: linear-gradient(135deg, #ffc28a, #e0671b 60%, #a9430e);
}
.smooth + .smooth { margin-top: 10px; }
.check-angle { width: 98px; }
.check-dev { width: 124px; }
.setback { height: 32px; margin-top: 5px; }
.slider { display: grid; width: 97px; margin: 0 14px 0 8px; }
.slider output { height: 16px; line-height: 16px; padding-left: 6px; }
.slider input {
  appearance: none;
  width: 97px;
  height: 16px;
  background: linear-gradient(#4b453f, #4b453f) center / 100% 2px no-repeat;
}
.slider input::-webkit-slider-thumb {
  appearance: none;
  width: 12px;
  height: 16px;
  border: 1px solid #7fa9c8;
  background: linear-gradient(90deg, #bfe3f4, #5b9fca 40%, #20415e 50%, #8cc4e2 60%, #5590bb);
}
.spaced { margin-top: 6px; }
.connect { margin-top: 4px; gap: 13px; }
.drop-off { width: 154px; }
.drop-off select { height: 27px; border-color: #c8c4be; background: #c9c7c5; color: #8b8b8b; opacity: 1; }
.drop-off::after { border-color: #999; }
.add { width: 68px; margin-top: 2px; }
.pointer { position: absolute; left: 318px; bottom: -11px; width: 12px; height: 18px; }

/* ---- main window ---- */
.stage { display: flex; flex-direction: column; min-width: 0; overflow: hidden; }
.titlebar {
  display: flex;
  justify-content: flex-end;
  gap: 3px;
  height: 25px;
  padding-top: 2px;
  border-bottom: 3px solid #f4f4fa;
  background: #c8c9e0;
}
.titlebar button { width: 18px; height: 18px; border: 0; background: #eff0f4; }
.titlebar svg { display: block; }

.toolbars {
  border-bottom: 5px solid #92939f;
  background: linear-gradient(#c6c6df, #d2d2e8);
}
.sep { flex: none; width: 3px; height: 18px; border: 1px solid; border-color: #fff #aaaabb #aaaabb #fff; background: #eee; }
.more { color: #f4f4fc; font-size: 18px; margin-left: auto; padding-right: 4px; }

.graphic { display: flex; align-items: flex-start; height: 38px; padding-top: 3px; }
.graphic .sep { margin: 0 9px 0 14px; }
.graphic .drop { flex: 0 1 75px; min-width: 0; margin-right: 2px; }
.graphic .drop select { height: 29px; padding: 0 20px 2px 6px; background: #fafafc; border-color: #8d8e98 #9b9ca6 #fff #d8d8e2; }
.graphic .gray select { background: #d3d3d8; }
.graphic .drop.narrow { flex-basis: 48px; }
.graphic .drop::after { top: 10px; }
.dot { width: 3px; height: 5px; margin-top: 8px; border-radius: 0 4px 4px 0; background: #24247a; }

.tools { display: flex; align-items: center; height: 43px; }
.tools button, .redo { position: relative; flex: none; width: 31px; height: 30px; border: 0; background: none; }
.tools svg, .redo svg { display: block; width: 24px; height: 24px; margin: auto; overflow: visible; }
.tools .sep { margin: 0 8px 6px 9px; }
.menu::after {
  content: "";
  position: absolute;
  right: -2px;
  bottom: -1px;
  border: solid transparent;
  border-width: 4px 4px 0;
  border-top-color: #111;
}
.t1 { margin-left: -17px; }
.t1 button { width: 32px; }
.t1 .sep { margin: 0 7px 6px 12px; }
.t1 .sep ~ .sep ~ button { margin-right: 4px; }
.t2 { margin-left: -7px; }
.t2 button { width: 30px; }
.t2 .sep { margin: 0 9px 6px 10px; }
.t3 { margin-left: -6px; }
.t4 { margin-left: -3px; }
.t5 { margin-left: -4px; height: 39px; padding-top: 4px; }
.t5 .apart { margin-left: 22px; margin-right: 5px; }
.fx { font: italic bold 20px "Liberation Serif", serif; }
.fx .arg { font: bold 11px "Liberation Sans", sans-serif; }

.viewport { display: block; flex: 1; min-height: 0; width: 100%; border-right: 1px solid #b9bacb; }
.scene-label { font-size: 15px; }
.axis-label { font-size: 15px; fill: #e5cb2b; }
.axis-label.pale { fill: #e6e6f2; }

.bottombar {
  display: flex;
  align-items: center;
  flex: none;
  height: 41px;
  padding-right: 4px;
  border-top: 3px solid #f5f5fb;
  border-bottom: 2px solid #94959f;
  background: linear-gradient(#dcdcec, #c4c4dc);
}
.bottombar .tools { height: 36px; margin-left: -13px; }
.geoset { flex: 0 1 192px; min-width: 0; }
.geoset select { background: #dcdedf; }
.bottombar .sep { margin: 0 9px 10px 11px; }
.redo svg { width: 28px; height: 26px; }
.xn { font: 11px "Liberation Sans", sans-serif; }
.xn .n { fill: #2531d2; font-size: 12px; }
.bottombar .more { margin: -16px 8px 0 14px; padding: 0; }
.logo { width: 46px; height: 38px; flex: none; margin-left: auto; overflow: visible; }
.brand { font: italic bold 11px "Liberation Sans", sans-serif; fill: #40348f; }

.command { display: flex; flex: none; gap: 3px; height: 15px; overflow: hidden; }
.command label { width: 6px; line-height: 20px; }
.command input { flex: 1; min-width: 0; height: 24px; padding: 0 3px; border: 1px solid #999; background: #fafbfc; }
.command button { width: 34px; height: 24px; padding: 2px 4px; border: 2px solid; border-color: #fff #8b8b98 #8b8b98 #fff; background: #d2d2df; }
.command svg { display: block; width: 24px; height: 14px; }
```
